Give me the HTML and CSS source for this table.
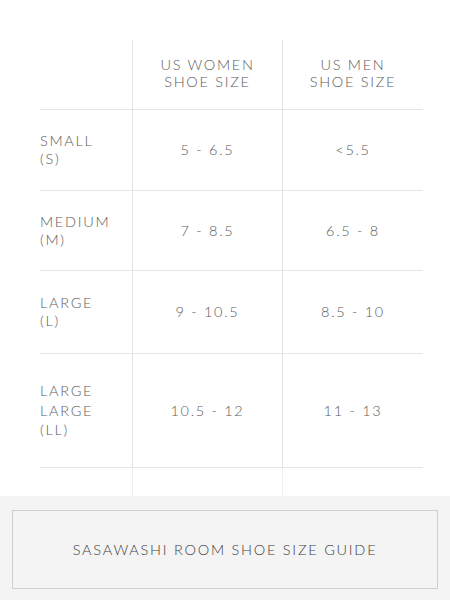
FILE: index.html
```html
<!DOCTYPE html>
<html>
<head>
<meta charset="utf-8">
<link rel="stylesheet" href="styles.css">
</head>
<body>
<div class="page">
  <div class="size-table">
    <div class="cell label head"></div>
    <div class="cell value head">US WOMEN<br>SHOE SIZE</div>
    <div class="cell value head">US MEN<br>SHOE SIZE</div>

    <div class="cell label">SMALL<br>(S)</div>
    <div class="cell value">5 - 6.5</div>
    <div class="cell value">&lt;5.5</div>

    <div class="cell label">MEDIUM<br>(M)</div>
    <div class="cell value">7 - 8.5</div>
    <div class="cell value">6.5 - 8</div>

    <div class="cell label">LARGE<br>(L)</div>
    <div class="cell value">9 - 10.5</div>
    <div class="cell value">8.5 - 10</div>

    <div class="cell label tall">LARGE<br>LARGE<br>(LL)</div>
    <div class="cell value">10.5 - 12</div>
    <div class="cell value">11 - 13</div>

    <div class="cell label end"></div>
    <div class="cell value end"></div>
    <div class="cell value end"></div>
  </div>
  <div class="guide-panel">
    <div class="guide-button">SASAWASHI ROOM SHOE SIZE GUIDE</div>
  </div>
</div>
</body>
</html>
```

FILE: styles.css
```css
html, body {
  margin: 0;
  padding: 0;
  background: #ffffff;
}

.page {
  width: 450px;
  height: 600px;
  display: flex;
  flex-direction: column;
  font-family: "Lato", "Noto Sans", sans-serif;
  font-weight: 300;
  color: #5c5c5c;
  letter-spacing: 1.7px;
  font-size: 14.5px;
}

.size-table {
  margin: 40px 0 0 40px;
  width: 383px;
  display: grid;
  grid-template-columns: 92px 150px 141px;
  grid-template-rows: 70px 81px 80px 83px 114px 28px;
}

.cell {
  box-sizing: border-box;
  border-bottom: 1px solid #e4e4e4;
  display: flex;
  align-items: center;
  line-height: 18px;
}

.label {
  justify-content: flex-start;
}

.label.tall {
  line-height: 19.5px;
}

.value {
  justify-content: center;
  text-align: center;
  border-left: 1px solid #e2e2e2;
}

.value.head {
  line-height: 17px;
  padding-bottom: 4px;
}

.cell.end {
  border-bottom: none;
}

.value.end {
  border-left-color: #efefef;
}

.guide-panel {
  flex: 1;
  background: #f4f4f4;
  padding: 14px 12px 12px 12px;
  box-sizing: border-box;
}

.guide-button {
  box-sizing: border-box;
  height: 79px;
  border: 1px solid #cfcfcf;
  display: flex;
  align-items: center;
  justify-content: center;
  color: #404040;
  font-size: 14.5px;
  letter-spacing: 1.75px;
}
```
